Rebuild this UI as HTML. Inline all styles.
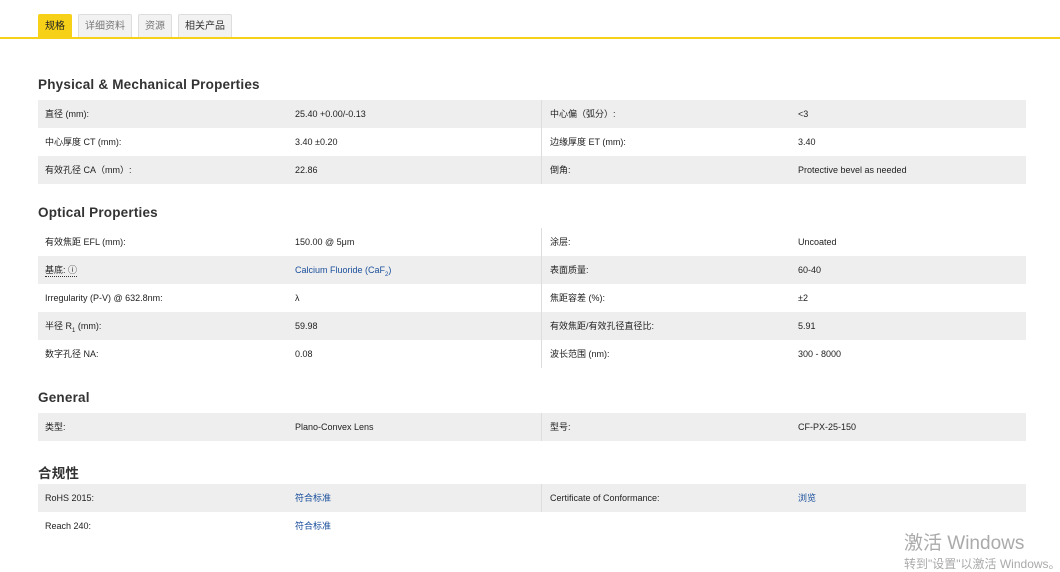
<!DOCTYPE html>
<html><head><meta charset="utf-8"><style>
body{margin:0;width:1060px;height:569px;overflow:hidden;background:#fff;font-family:"Liberation Sans","Noto Sans CJK SC",sans-serif;color:#222;position:relative}
.tabs{position:absolute;top:14px;left:38px;display:flex;gap:6px}
.tab{height:23px;line-height:23px;padding:0 6px;font-size:10px;color:#777;background:#f2f2f2;border:1px solid #ddd;border-bottom:none;border-radius:2px 2px 0 0}
.tab.on{background:#f7d117;color:#222;border-color:#f7d117}
.tab.d{color:#333}
.line{position:absolute;top:37px;left:0;width:1060px;height:2px;background:#f7d117}
h2{position:absolute;left:38px;margin:0;font-size:13.5px;font-weight:bold;color:#333;letter-spacing:0.2px}
table{position:absolute;left:38px;width:988px;border-collapse:collapse;font-size:9px;table-layout:fixed}
td{height:28px;line-height:28px;padding:0;white-space:nowrap;overflow:hidden}
td.a{padding-left:7px;width:250px}
td.b{width:246px}
td.c{border-left:1px solid #ddd;padding-left:8px;width:248px}
.g td{background:#eee}
a{color:#1a4f9c;text-decoration:none}
sub{font-size:6px;line-height:0}
.wm{position:absolute;left:904px;color:#aaa}
</style></head><body>
<div class="tabs"><div class="tab on">规格</div><div class="tab">详细资料</div><div class="tab">资源</div><div class="tab d">相关产品</div></div>
<div class="line"></div>
<h2 style="top:77px">Physical &amp; Mechanical Properties</h2>
<table style="top:100px">
<tr class="g"><td class="a">直径 (mm):</td><td class="b">25.40 +0.00/-0.13</td><td class="c">中心偏（弧分）:</td><td>&lt;3</td></tr>
<tr><td class="a">中心厚度 CT (mm):</td><td class="b">3.40 ±0.20</td><td class="c">边缘厚度 ET (mm):</td><td>3.40</td></tr>
<tr class="g"><td class="a">有效孔径 CA（mm）:</td><td class="b">22.86</td><td class="c">倒角:</td><td>Protective bevel as needed</td></tr>
</table>
<h2 style="top:205px">Optical Properties</h2>
<table style="top:228px">
<tr><td class="a">有效焦距 EFL (mm):</td><td class="b">150.00 @ 5μm</td><td class="c">涂层:</td><td>Uncoated</td></tr>
<tr class="g"><td class="a"><span style="border-bottom:1px dotted #333;line-height:12px;display:inline-block">基底: ⓘ</span></td><td class="b"><a>Calcium Fluoride (CaF<sub>2</sub>)</a></td><td class="c">表面质量:</td><td>60-40</td></tr>
<tr><td class="a">Irregularity (P-V) @ 632.8nm:</td><td class="b">λ</td><td class="c">焦距容差 (%):</td><td>±2</td></tr>
<tr class="g"><td class="a">半径 R<sub>1</sub> (mm):</td><td class="b">59.98</td><td class="c">有效焦距/有效孔径直径比:</td><td>5.91</td></tr>
<tr><td class="a">数字孔径 NA:</td><td class="b">0.08</td><td class="c">波长范围 (nm):</td><td>300 - 8000</td></tr>
</table>
<h2 style="top:390px">General</h2>
<table style="top:413px">
<tr class="g"><td class="a">类型:</td><td class="b">Plano-Convex Lens</td><td class="c">型号:</td><td>CF-PX-25-150</td></tr>
</table>
<h2 style="top:462px">合规性</h2>
<table style="top:484px">
<tr class="g"><td class="a">RoHS 2015:</td><td class="b"><a>符合标准</a></td><td class="c">Certificate of Conformance:</td><td><a>浏览</a></td></tr>
<tr><td class="a">Reach 240:</td><td class="b"><a>符合标准</a></td><td class="c" style="border-left:none"></td><td></td></tr>
</table>
<div class="wm" style="top:528px;font-size:19px">激活 Windows</div>
<div class="wm" style="top:555px;font-size:12px;white-space:nowrap">转到"设置"以激活 Windows。</div>
</body></html>
